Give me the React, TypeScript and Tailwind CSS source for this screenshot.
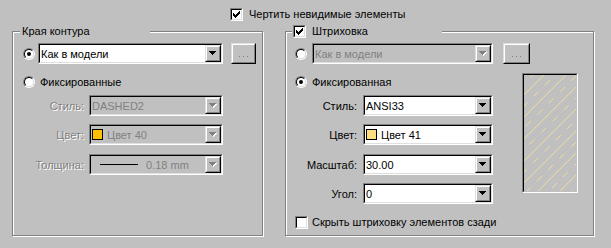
import React from "react";

const CHECK_PIXELS: [number, number, number][] = [
  [6, 0, 1],
  [5, 1, 2],
  [0, 2, 1],
  [4, 2, 3],
  [0, 3, 2],
  [3, 3, 3],
  [0, 4, 5],
  [1, 5, 3],
  [2, 6, 1],
];

const Check = ({ checked }: { checked?: boolean }) => (
  <div className="w-[13px] h-[13px] shrink-0 border border-t-[#808080] border-l-[#808080] border-b-white border-r-white">
    <div className="w-full h-full flex items-center justify-center bg-white border border-t-black border-l-black border-b-[#dfdfdf] border-r-[#dfdfdf]">
      {checked && (
        <svg width="7" height="7" shapeRendering="crispEdges">
          {CHECK_PIXELS.map(([x, y, w], i) => (
            <rect key={i} x={x} y={y} width={w} height="1" fill="#000" />
          ))}
        </svg>
      )}
    </div>
  </div>
);

const Radio = ({ checked }: { checked?: boolean }) => (
  <div className="w-[12px] h-[12px] shrink-0 rounded-full border border-t-[#808080] border-l-[#808080] border-b-white border-r-white">
    <div className="w-full h-full rounded-full flex items-center justify-center bg-white border border-t-black border-l-black border-b-[#dfdfdf] border-r-[#dfdfdf]">
      {checked && <div className="w-[4px] h-[4px] rounded-full bg-black" />}
    </div>
  </div>
);

const Arrow = ({ disabled }: { disabled?: boolean }) => {
  const d = "M0 0H7V1H6V2H5V3H4V4H3V3H2V2H1V1H0Z";
  return (
    <svg width="8" height="5" shapeRendering="crispEdges">
      {disabled && <path d={d} fill="#fff" transform="translate(1 1)" />}
      <path d={d} fill={disabled ? "#808080" : "#000"} />
    </svg>
  );
};

const Raised = ({ className, children }: { className?: string; children?: React.ReactNode }) => (
  <div className={`shrink-0 border border-t-[#dfdfdf] border-l-[#dfdfdf] border-b-black border-r-black ${className ?? ""}`}>
    <div className="w-full h-full flex items-center justify-center bg-[#c0c0c0] border border-t-white border-l-white border-b-[#808080] border-r-[#808080]">
      {children}
    </div>
  </div>
);

const Combo = ({
  w,
  disabled,
  children,
}: {
  w: string;
  disabled?: boolean;
  children?: React.ReactNode;
}) => (
  <div className={`h-[21px] shrink-0 border border-t-[#808080] border-l-[#808080] border-b-white border-r-white ${w}`}>
    <div
      className={`w-full h-full flex items-center border border-t-black border-l-black border-b-[#dfdfdf] border-r-[#dfdfdf] ${
        disabled ? "bg-[#c0c0c0] text-[#808080]" : "bg-white text-black"
      }`}
    >
      <div className="flex-1 flex items-center gap-[4px] pl-[1px] overflow-hidden whitespace-nowrap">{children}</div>
      <Raised className="w-[16px] h-[17px]">
        <Arrow disabled={disabled} />
      </Raised>
    </div>
  </div>
);

const Dots = ({ w }: { w: string }) => (
  <Raised className={`h-[21px] ${w}`}>
    <svg width="9" height="3" className="mt-[5px]" shapeRendering="crispEdges">
      {[0, 4, 8].map((x) => (
        <rect key={x} x={x} y={1} width="1" height="1" fill="#808080" />
      ))}
    </svg>
  </Raised>
);

const Swatch = ({ color }: { color: string }) => (
  <div className="w-[11px] h-[11px] border border-black" style={{ background: color }} />
);

const GroupBox = ({
  w,
  legend,
  children,
}: {
  w: string;
  legend: React.ReactNode;
  children?: React.ReactNode;
}) => (
  <div className={`relative h-[205px] border border-[#808080] shadow-[inset_1px_1px_0_#fff,1px_1px_0_#fff] ${w}`}>
    {legend}
    {children}
  </div>
);

const Label = ({ w, disabled, children }: { w: string; disabled?: boolean; children: React.ReactNode }) => (
  <span
    className={`text-right ${w} ${disabled ? "text-[#808080] [text-shadow:1px_1px_0_#fff]" : "text-black"}`}
  >
    {children}
  </span>
);

// ANSI33: solid line, then a dashed one between
const Hatch = () => {
  const lines = [];
  for (let c = -2, i = 0; c < 190; c += 11, i++) {
    lines.push(
      <line
        key={c}
        x1={c}
        y1={0}
        x2={c - 130}
        y2={130}
        stroke="#eedc9c"
        strokeWidth="1"
        strokeDasharray={i % 2 ? "7 9" : undefined}
        strokeDashoffset={i * 3}
      />
    );
  }
  return (
    <svg width="52" height="116" className="block">
      {lines}
    </svg>
  );
};

export default function App() {
  return (
    <div className="w-[611px] h-[248px] bg-[#c0c0c0] text-black font-['Liberation_Sans',Arial,sans-serif] text-[11px] leading-[14px] overflow-hidden">
      <div className="flex items-center gap-[6px] pl-[230px] pt-[7px]">
        <Check checked />
        <span>Чертить невидимые элементы</span>
      </div>

      <div className="flex gap-[22px] pl-[12px] mt-[10px]">
        {/* left group */}
        <GroupBox
          w="w-[251px]"
          legend={
            <div className="absolute left-[7px] top-[-8px] w-[130px] pl-[2px] bg-[#c0c0c0]">Края контура</div>
          }
        >
          <div className="flex flex-col pl-[10px] pt-[11px]">
            <div className="flex items-center">
              <Radio checked />
              <div className="ml-[3px]">
                <Combo w="w-[185px]">Как в модели</Combo>
              </div>
              <div className="ml-[8px]">
                <Dots w="w-[25px]" />
              </div>
            </div>
            <div className="flex items-center gap-[5px] mt-[11px]">
              <Radio />
              <span>Фиксированные</span>
            </div>
            <div className="flex items-center gap-[5px] mt-[6px]">
              <Label w="w-[61px]" disabled>Стиль:</Label>
              <Combo w="w-[134px]" disabled>DASHED2</Combo>
            </div>
            <div className="flex items-center gap-[5px] mt-[8px]">
              <Label w="w-[61px]" disabled>Цвет:</Label>
              <Combo w="w-[134px]" disabled>
                <Swatch color="#ffbf00" />
                <span>Цвет 40</span>
              </Combo>
            </div>
            <div className="flex items-center gap-[5px] mt-[9px]">
              <Label w="w-[61px]" disabled>Толщина:</Label>
              <Combo w="w-[134px]" disabled>
                <div className="ml-[8px] w-[38px] h-px bg-black" />
                <span className="ml-[4px]">0.18 mm</span>
              </Combo>
            </div>
          </div>
        </GroupBox>

        {/* right group */}
        <GroupBox
          w="w-[309px]"
          legend={
            <div className="absolute left-[6px] top-[-8px] w-[150px] pl-[1px] flex items-center gap-[6px] bg-[#c0c0c0]">
              <Check checked />
              <span>Штриховка</span>
            </div>
          }
        >
          <div className="flex flex-col pl-[9px] pt-[11px]">
            <div className="flex items-center">
              <Radio />
              <div className="ml-[5px]">
                <Combo w="w-[181px]" disabled>Как в модели</Combo>
              </div>
              <div className="ml-[10px]">
                <Dots w="w-[27px]" />
              </div>
            </div>
            <div className="flex">
              <div className="flex flex-col">
                <div className="flex items-center gap-[5px] mt-[11px]">
                  <Radio checked />
                  <span>Фиксированная</span>
                </div>
                <div className="flex items-center gap-[6px] mt-[6px]">
                  <Label w="w-[62px]">Стиль:</Label>
                  <Combo w="w-[130px]">ANSI33</Combo>
                </div>
                <div className="flex items-center gap-[6px] mt-[8px]">
                  <Label w="w-[62px]">Цвет:</Label>
                  <Combo w="w-[130px]">
                    <Swatch color="#ffdf7f" />
                    <span>Цвет 41</span>
                  </Combo>
                </div>
                <div className="flex items-center gap-[6px] mt-[9px]">
                  <Label w="w-[62px]">Масштаб:</Label>
                  <Combo w="w-[130px]">30.00</Combo>
                </div>
                <div className="flex items-center gap-[6px] mt-[8px]">
                  <Label w="w-[62px]">Угол:</Label>
                  <Combo w="w-[130px]">0</Combo>
                </div>
              </div>
              <div className="ml-[29px] mt-[9px] w-[56px] h-[120px] border border-t-[#808080] border-l-[#808080] border-b-white border-r-white">
                <div className="w-full h-full border border-t-black border-l-black border-b-[#c0c0c0] border-r-[#c0c0c0] overflow-hidden">
                  <Hatch />
                </div>
              </div>
            </div>
            <div className="flex items-center gap-[4px] mt-[11px]">
              <Check />
              <span>Скрыть штриховку элементов сзади</span>
            </div>
          </div>
        </GroupBox>
      </div>
    </div>
  );
}
